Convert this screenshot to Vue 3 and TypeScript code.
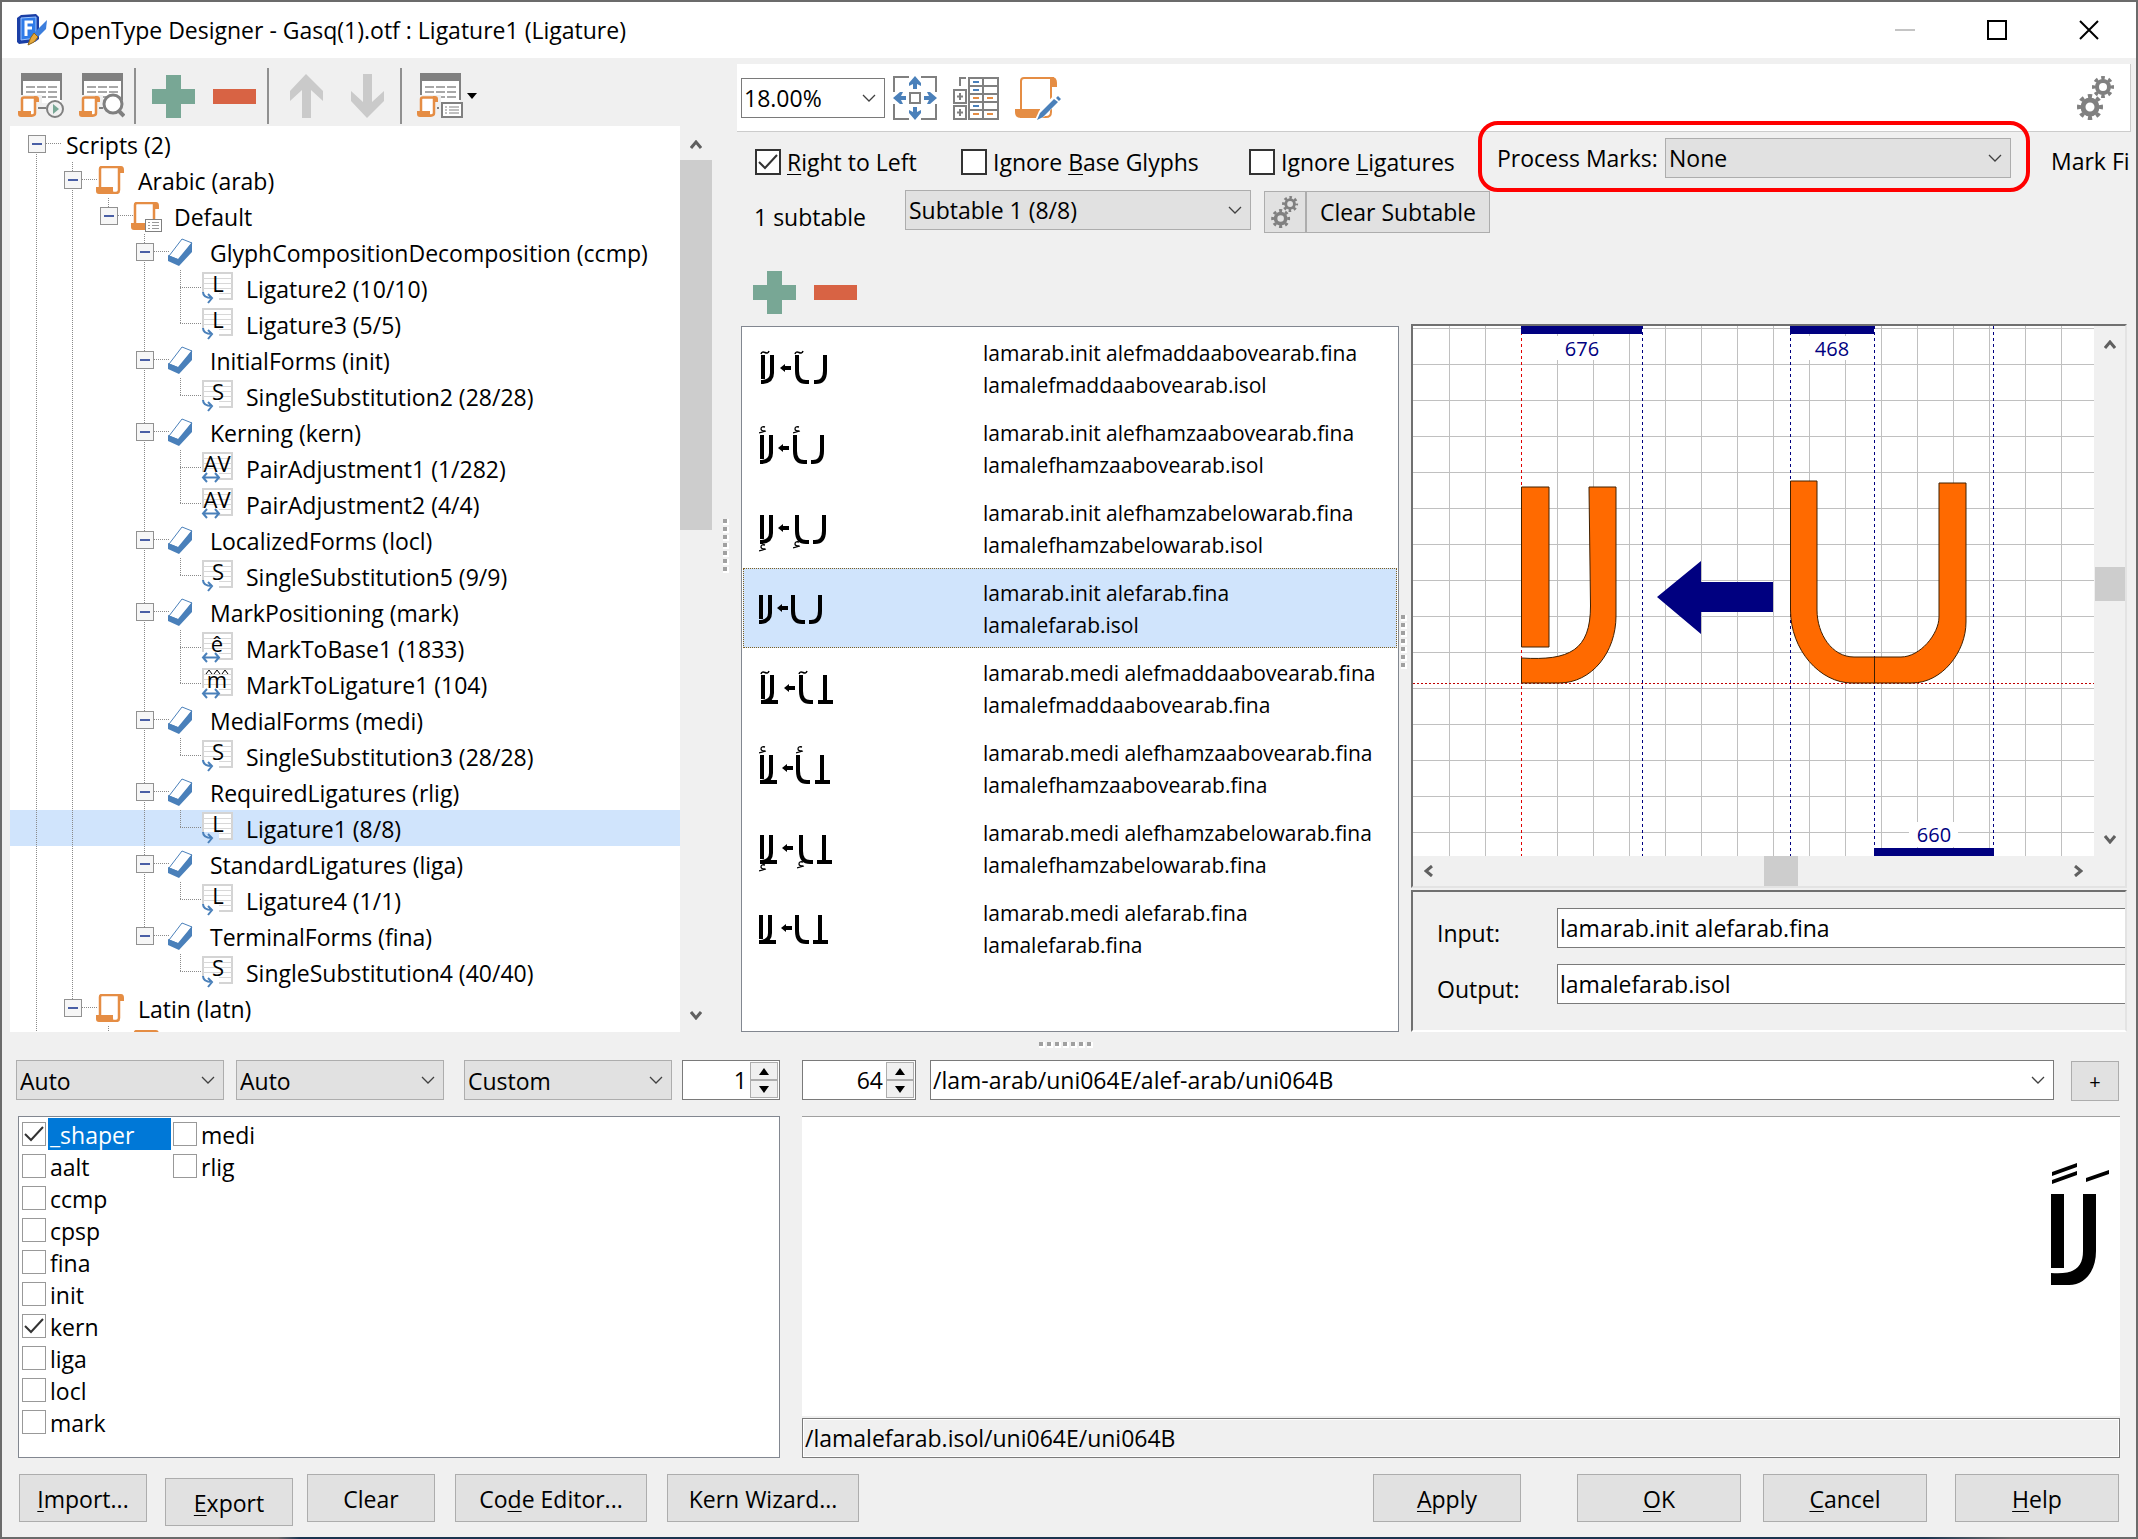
<script setup lang="ts">
import { ref } from 'vue'

type Cell = 'none' | 'line' | 'tee' | 'elbow' | 'root' | 'boxmid' | 'boxend'
interface Row {
  label: string
  cells: Cell[]
  icon: '' | 'scroll' | 'scroll-list' | 'tag' | 'lookup'
  glyph?: string
  move?: boolean
  selected?: boolean
}

const feature = (label: string, last = false): Row => ({
  label, cells: ['line', 'line', 'none', last ? 'boxend' : 'boxmid'], icon: 'tag',
})
const lookup = (label: string, glyph: string, opts: { move?: boolean; more?: boolean; last?: boolean; selected?: boolean } = {}): Row => ({
  label,
  cells: ['line', 'line', 'none', opts.last ? 'none' : 'line', opts.more ? 'tee' : 'elbow'],
  icon: 'lookup', glyph, move: opts.move, selected: opts.selected,
})

const tree: Row[] = [
  { label: 'Scripts (2)', cells: ['root'], icon: '' },
  { label: 'Arabic (arab)', cells: ['line', 'boxmid'], icon: 'scroll' },
  { label: 'Default', cells: ['line', 'line', 'boxend'], icon: 'scroll-list' },
  feature('GlyphCompositionDecomposition (ccmp)'),
  lookup('Ligature2 (10/10)', 'L', { more: true }),
  lookup('Ligature3 (5/5)', 'L'),
  feature('InitialForms (init)'),
  lookup('SingleSubstitution2 (28/28)', 'S'),
  feature('Kerning (kern)'),
  lookup('PairAdjustment1 (1/282)', 'AV', { move: true, more: true }),
  lookup('PairAdjustment2 (4/4)', 'AV', { move: true }),
  feature('LocalizedForms (locl)'),
  lookup('SingleSubstitution5 (9/9)', 'S'),
  feature('MarkPositioning (mark)'),
  lookup('MarkToBase1 (1833)', 'ê', { move: true, more: true }),
  lookup('MarkToLigature1 (104)', 'm', { move: true }),
  feature('MedialForms (medi)'),
  lookup('SingleSubstitution3 (28/28)', 'S'),
  feature('RequiredLigatures (rlig)'),
  lookup('Ligature1 (8/8)', 'L', { selected: true }),
  feature('StandardLigatures (liga)'),
  lookup('Ligature4 (1/1)', 'L'),
  feature('TerminalForms (fina)', true),
  lookup('SingleSubstitution4 (40/40)', 'S', { last: true }),
  { label: 'Latin (latn)', cells: ['line', 'boxend'], icon: 'scroll' },
  { label: '', cells: ['line', 'none', 'boxend'], icon: 'scroll-list' },
]

interface Ligature {
  input: string
  output: string
  bar: number
  arrow: number
  alef: number
  lam: number
  medial?: boolean
  mark?: 'madda' | 'above' | 'below'
  selected?: boolean
}
const ligatures: Ligature[] = [
  { input: 'lamarab.init alefmaddaabovearab.fina', output: 'lamalefmaddaabovearab.isol', bar: 17, arrow: 36, alef: 51, lam: 70, mark: 'madda' },
  { input: 'lamarab.init alefhamzaabovearab.fina', output: 'lamalefhamzaabovearab.isol', bar: 16, arrow: 34, alef: 49, lam: 67, mark: 'above' },
  { input: 'lamarab.init alefhamzabelowarab.fina', output: 'lamalefhamzabelowarab.isol', bar: 16, arrow: 34, alef: 51, lam: 69, mark: 'below' },
  { input: 'lamarab.init alefarab.fina', output: 'lamalefarab.isol', bar: 15, arrow: 33, alef: 47, lam: 65, selected: true },
  { input: 'lamarab.medi alefmaddaabovearab.fina', output: 'lamalefmaddaabovearab.fina', bar: 17, arrow: 40, alef: 55, lam: 74, medial: true, mark: 'madda' },
  { input: 'lamarab.medi alefhamzaabovearab.fina', output: 'lamalefhamzaabovearab.fina', bar: 16, arrow: 38, alef: 52, lam: 71, medial: true, mark: 'above' },
  { input: 'lamarab.medi alefhamzabelowarab.fina', output: 'lamalefhamzabelowarab.fina', bar: 16, arrow: 38, alef: 55, lam: 73, medial: true, mark: 'below' },
  { input: 'lamarab.medi alefarab.fina', output: 'lamalefarab.fina', bar: 15, arrow: 37, alef: 51, lam: 69, medial: true },
]

const features = ref([
  { tag: '_shaper', on: true, current: true },
  { tag: 'aalt', on: false }, { tag: 'ccmp', on: false }, { tag: 'cpsp', on: false },
  { tag: 'fina', on: false }, { tag: 'init', on: false }, { tag: 'kern', on: true },
  { tag: 'liga', on: false }, { tag: 'locl', on: false }, { tag: 'mark', on: false },
  { tag: 'medi', on: false }, { tag: 'rlig', on: false },
] as { tag: string; on: boolean; current?: boolean }[])

const rightToLeft = ref(true)
const ignoreBase = ref(false)
const ignoreLigatures = ref(false)
const inputGlyphs = ref('lamarab.init alefarab.fina')
const outputGlyphs = ref('lamalefarab.isol')
const sample = ref('/lam-arab/uni064E/alef-arab/uni064B')
const shaped = ref('/lamalefarab.isol/uni064E/uni064B')
const alternate = ref('1')
const size = ref('64')
</script>

<template>
  <div class="desktop">
    <svg class="defs" aria-hidden="true">
      <symbol id="scroll" viewBox="0 0 28 28">
        <path d="M4 21V3Q4 1 6 1H24Q23 2 23 5V23Q23 27 19 27H3V21Z" fill="#fff" />
        <path d="M4 21V3Q4 1 6 1H24M23 2V24Q23 27 20 27H3" fill="none" stroke="#e58d44" stroke-width="2.500" />
        <path d="M22 0H25Q28 0 28 4V7H22ZM0 21H17V24Q17 27 20 28H3Q0 28 0 25Z" fill="#e58d44" />
      </symbol>
      <symbol id="roll" viewBox="0 0 21 21">
        <path d="M4 15V3Q4 1.500 6 1.500H17V17Q17 19.500 14 19.500H3V15Z" fill="#fff" />
        <path d="M4 15V3Q4 1.500 6 1.500H18M17 2V17Q17 19.500 14 19.500H3" fill="none" stroke="#e58d44" stroke-width="2.500" />
        <path d="M16 0H18Q21 0 21 3V6H16ZM0 15H13V18Q13 20 15 21H3Q0 21 0 18Z" fill="#e58d44" />
      </symbol>
      <symbol id="note" viewBox="0 0 22 16">
        <rect x="1" y="1" width="20" height="14" fill="#fff" stroke="#808080" stroke-width="2" />
        <path d="M4 5H6M8 5H18M4 8H6M8 8H18M4 11H6M8 11H18" stroke="#808080" stroke-width="1" />
      </symbol>
      <symbol id="sheet" viewBox="0 0 46 46">
        <rect x="4" y="1" width="39" height="29" fill="#fff" />
        <rect x="3" y="0" width="41" height="8" fill="#808080" />
        <path d="M4 8V22M43 8V27" stroke="#808080" stroke-width="2" />
        <path d="M8 14H17M19 14H28M30 14H39M8 19H17M19 19H28M30 19H39M24 24H28M30 24H39" stroke="#a8a8a8" stroke-width="2" />
      </symbol>
      <symbol id="tag" viewBox="0 0 25 28">
        <path d="M14 1L24 5L11 22L1 18Z" fill="#fff" stroke="#4a80ba" stroke-width="1" />
        <path d="M0 17L10 21L24 4V14L11 28L0 23Z" fill="#4a80ba" />
      </symbol>
      <symbol id="gears" viewBox="0 0 38 44">
        <g fill="none" stroke="#808080">
          <circle cx="26" cy="11" r="6" stroke-width="4" />
          <circle cx="26" cy="11" r="9" stroke-width="4" pathLength="16" stroke-dasharray="1 1" stroke-dashoffset="0.5" />
          <circle cx="13" cy="31" r="7" stroke-width="5" />
          <circle cx="13" cy="31" r="11" stroke-width="4" pathLength="16" stroke-dasharray="1 1" stroke-dashoffset="0.5" />
        </g>
      </symbol>
      <symbol id="plus" viewBox="0 0 43 43"><path d="M14 0H29V14H43V29H29V43H14V29H0V14H14Z" fill="#78a795" /></symbol>
      <symbol id="minus" viewBox="0 0 43 43"><path d="M0 14H43V29H0Z" fill="#d86344" /></symbol>
      <symbol id="chevron" viewBox="0 0 14 8"><path d="M1 1L7 7L13 1" fill="none" stroke="#404040" stroke-width="1.3" /></symbol>
      <symbol id="angle" viewBox="0 0 12 10"><path d="M1 8L6 2L11 8" fill="none" stroke="#606060" stroke-width="3" /></symbol>
      <symbol id="madda" viewBox="0 0 10 5"><path d="M1 4Q2 1 5 2.500T9 1" fill="none" stroke="#000" stroke-width="1.500" /></symbol>
      <symbol id="hamza" viewBox="0 0 8 8"><path d="M6 1Q2 0 2 3Q2 5 6 5M0 7L7 5" fill="none" stroke="#000" stroke-width="1.300" /></symbol>
    </svg>

    <div class="window">
      <header class="titlebar">
        <svg class="logo" width="32" height="32" viewBox="0 0 32 32" aria-hidden="true">
          <path d="M2 4L6 1L21 0L24 3V25L20 28L4 30L2 28Z" fill="#1b3fa6" />
          <path d="M6 4L21 3V24L6 26Z" fill="#2f7be8" stroke="#9cc6ff" stroke-width="1" />
          <path d="M11 22V8H18M11 14H17" fill="none" stroke="#fff" stroke-width="3" />
          <path d="M32 6L31 15L23 23L19 19Z" fill="#3c7edc" />
          <path d="M19 19L23 23Q20 29 13 31Q15 23 19 19Z" fill="#e6a93c" stroke="#8a6420" stroke-width="1" />
        </svg>
        <h1>OpenType Designer - Gasq(1).otf : Ligature1 (Ligature)</h1>
        <div class="caption">
          <button aria-label="Minimize"><svg width="20" height="20"><path d="M0 10H20" stroke="#c4c4c4" stroke-width="2" /></svg></button>
          <button aria-label="Maximize"><svg width="20" height="20"><rect x="1" y="1" width="18" height="18" fill="none" stroke="#000" stroke-width="2" /></svg></button>
          <button aria-label="Close"><svg width="20" height="20"><path d="M1 1L19 19M19 1L1 19" stroke="#000" stroke-width="2" /></svg></button>
        </div>
      </header>

      <main class="upper">
        <section class="left">
          <div class="toolbar">
            <button aria-label="Compile"><svg width="46" height="46" viewBox="0 0 46 46">
              <use href="#sheet" width="46" height="46" />
              <rect x="0" y="22" width="24" height="24" fill="#f0f0f0" />
              <use href="#roll" x="0" y="23" width="21" height="21" />
              <path d="M20 35H28" stroke="#808080" stroke-width="2" />
              <circle cx="37" cy="36" r="8" fill="#f0f0f0" stroke="#808080" stroke-width="2" />
              <path d="M35 31L41 36L35 41Z" fill="#78a795" />
            </svg></button>
            <button aria-label="Find"><svg width="46" height="46" viewBox="0 0 46 46">
              <use href="#sheet" width="46" height="46" />
              <rect x="0" y="22" width="24" height="24" fill="#f0f0f0" />
              <use href="#roll" x="0" y="23" width="21" height="21" />
              <path d="M20 35H24" stroke="#808080" stroke-width="2" />
              <circle cx="34" cy="31" r="9" fill="#fff" stroke="#808080" stroke-width="3" />
              <path d="M39 37L45 43" stroke="#808080" stroke-width="4" />
            </svg></button>
            <i class="sep"></i>
            <button aria-label="Add"><svg width="43" height="43"><use href="#plus" /></svg></button>
            <button aria-label="Remove"><svg width="43" height="43"><use href="#minus" /></svg></button>
            <i class="sep"></i>
            <button aria-label="Move up"><svg width="33" height="44" viewBox="0 0 33 44"><path d="M16 0L33 17V27L21 16V44H12V16L0 27V17Z" fill="#cacaca" /></svg></button>
            <button aria-label="Move down"><svg width="33" height="44" viewBox="0 0 33 44"><path d="M16 44L33 27V17L21 28V0H12V28L0 17V27Z" fill="#cacaca" /></svg></button>
            <i class="sep"></i>
            <button aria-label="Properties"><svg width="46" height="46" viewBox="0 0 46 46">
              <use href="#sheet" width="46" height="46" />
              <rect x="0" y="22" width="24" height="24" fill="#f0f0f0" />
              <use href="#roll" x="0" y="23" width="21" height="21" />
              <path d="M20 35H22" stroke="#808080" stroke-width="2" />
              <use href="#note" x="24" y="29" width="22" height="16" />
            </svg></button>
            <svg class="drop" width="10" height="6" aria-hidden="true"><path d="M0 0H10L5 6Z" fill="#000" /></svg>
          </div>
          <div class="tree-frame">
            <ul class="tree" role="tree">
              <li v-for="(row, i) in tree" :key="i" :class="{ selected: row.selected }" role="treeitem">
                <svg v-for="(c, j) in row.cells" :key="j" class="cell" width="36" height="36" viewBox="0 0 36 36" aria-hidden="true">
                  <g stroke="#8a8a8a" stroke-width="1" stroke-dasharray="1 1" fill="none">
                    <path v-if="c === 'line' || c === 'tee' || c === 'boxmid'" d="M18.500 0V36" />
                    <path v-if="c === 'elbow' || c === 'boxend'" d="M18.500 0V18" />
                    <path v-if="c === 'root'" d="M18.500 18V36" />
                    <path v-if="c === 'tee' || c === 'elbow'" d="M18 17.500H40" />
                    <path v-if="c === 'boxmid' || c === 'boxend' || c === 'root'" d="M28 17.500H44" />
                  </g>
                  <g v-if="c === 'boxmid' || c === 'boxend' || c === 'root'">
                    <rect x="10.500" y="9.500" width="17" height="17" fill="#f6f6f6" stroke="#919191" />
                    <path d="M14 18H24" stroke="#4a5fa5" stroke-width="2" />
                  </g>
                </svg>
                <svg v-if="row.icon" class="cell" width="36" height="36" viewBox="0 0 36 36" aria-hidden="true">
                  <use v-if="row.icon === 'scroll'" href="#scroll" x="6" y="4" width="28" height="28" />
                  <g v-else-if="row.icon === 'scroll-list'">
                    <use href="#scroll" x="5" y="4" width="28" height="28" />
                    <rect x="19.500" y="21.500" width="16" height="12" fill="#fff" stroke="#808080" />
                    <path d="M22 24.500H24M26 24.500H33M22 27.500H24M26 27.500H33M22 30.500H24M26 30.500H33" stroke="#999" />
                  </g>
                  <use v-else-if="row.icon === 'tag'" href="#tag" x="6" y="4" width="25" height="28" />
                  <g v-else>
                    <rect x="5" y="3" width="29" height="26" fill="#fff" stroke="#d4d4d4" stroke-width="2" />
                    <path d="M5 8.500H34M5 13.500H34M5 18.500H34M5 23.500H34" stroke="#d8d8d8" />
                    <path d="M4 22H21V34H4Z" :fill="row.selected ? '#d0e4fc' : '#fff'" />
                    <text :x="row.glyph === 'L' || row.glyph === 'S' ? 20 : 19" y="22" text-anchor="middle" class="mini">{{ row.glyph }}</text>
                    <path v-if="row.glyph === 'm'" d="M8 8L11 4L14 8M16 8L19 4L22 8M24 8L27 4L30 8" fill="none" stroke="#000" />
                    <path v-if="row.move" d="M9 23L5 27.500L9 32M17 23L21 27.500L17 32M6 27.500H20" fill="none" stroke="#4a80ba" stroke-width="2" />
                    <path v-else d="M5 22Q5 28 14 28M10 24L14 28L10 33" fill="none" stroke="#4a80ba" stroke-width="2" />
                  </g>
                </svg>
                <span v-if="row.label" class="label">{{ row.label }}</span>
              </li>
            </ul>
            <div class="vbar">
              <svg class="up" width="12" height="10"><use href="#angle" /></svg>
              <i class="thumb"></i>
              <svg class="down" width="12" height="10"><use href="#angle" /></svg>
            </div>
          </div>
        </section>

        <div class="grip vertical main-grip" aria-hidden="true"><i v-for="n in 7" :key="n"></i></div>

        <section class="right">
          <div class="toolbar light">
            <span class="pick zoom">
              <select aria-label="Zoom"><option>18.00%</option></select>
              <svg width="14" height="8"><use href="#chevron" /></svg>
            </span>
            <button aria-label="Fit"><svg width="44" height="44" viewBox="0 0 44 44">
              <path d="M16 1H1V16M28 1H43V16M1 28V43H16M43 28V43H28M17 17H27V27H17Z" fill="none" stroke="#808080" stroke-width="2" />
              <g fill="#4a80ba">
                <path d="M22 0L28 7V10L24 8V13H20V8L16 10V7Z" />
                <path d="M22 44L28 37V34L24 36V31H20V36L16 34V37Z" />
                <path d="M0 22L7 16H10L8 20H13V24H8L10 28H7Z" />
                <path d="M44 22L37 16H34L36 20H31V24H36L34 28H37Z" />
              </g>
            </svg></button>
            <button aria-label="Table"><svg width="46" height="44" viewBox="0 0 46 44">
              <path d="M16 2H45V43H16ZM16 10H45M16 18H45M16 26H45M16 34H45M30 2V43M1 14H13V27H1ZM1 30H13V43H1ZM7 10V2H13M7 17V24M4 20.500H10M7 33V40M4 36.500H10" fill="none" stroke="#808080" stroke-width="2" />
              <path d="M20 6H26M20 14H26M20 30H26" stroke="#4a80ba" stroke-width="2" />
              <path d="M20 22H26M34 22H40M20 38H26M34 38H40" stroke="#e58d44" stroke-width="2" />
            </svg></button>
            <button aria-label="Edit script"><svg width="46" height="44" viewBox="0 0 46 44">
              <path d="M6 33V5Q6 2 9 2H39M36 4V36Q36 41 31 41H5" fill="none" stroke="#e58d44" stroke-width="2" />
              <path d="M35 1H37Q42 1 42 7V11H35ZM0 33H25V37Q25 40 28 42H6Q0 42 0 36Z" fill="#e58d44" />
              <path d="M20 44L24 35L41 17L46 23L29 41Z" fill="#fff" />
              <path d="M22 44L25 37L39 23L43 26L28 41ZM41 22L43 20L46 23L44 25Z" fill="#4a80ba" />
            </svg></button>
            <button class="end" aria-label="Settings"><svg width="38" height="44"><use href="#gears" /></svg></button>
          </div>

          <div class="options">
            <label class="tick first"><input v-model="rightToLeft" type="checkbox" /><span><u>R</u>ight to Left</span></label>
            <label class="tick second"><input v-model="ignoreBase" type="checkbox" /><span>Ignore <u>B</u>ase Glyphs</span></label>
            <label class="tick third"><input v-model="ignoreLigatures" type="checkbox" /><span>Ignore <u>L</u>igatures</span></label>
            <div class="marks">
              <label for="marks">Process Marks:</label>
              <span class="pick grey wide">
                <select id="marks"><option>None</option></select>
                <svg width="14" height="8"><use href="#chevron" /></svg>
              </span>
            </div>
            <span class="filter">Mark Fi</span>
          </div>

          <div class="subtables">
            <label for="subtable">1 subtable</label>
            <span class="pick grey wide">
              <select id="subtable"><option>Subtable 1 (8/8)</option></select>
              <svg width="14" height="8"><use href="#chevron" /></svg>
            </span>
            <button class="btn gear" aria-label="Subtable settings"><svg width="28" height="32"><use href="#gears" /></svg></button>
            <button class="btn clear">Clear Subtable</button>
          </div>

          <div class="add-remove">
            <button aria-label="Add ligature"><svg width="43" height="43"><use href="#plus" /></svg></button>
            <button aria-label="Remove ligature"><svg width="43" height="43"><use href="#minus" /></svg></button>
          </div>

          <div class="editor">
            <ul class="ligatures">
              <li v-for="l in ligatures" :key="l.input" :class="{ selected: l.selected }">
                <svg width="240" height="78" aria-hidden="true">
                  <g :transform="`translate(${l.bar} 26)`" fill="none" stroke="#000">
                    <path d="M2 0V24" stroke-width="4" />
                    <path d="M11 0V18Q11 26 2 27H0" stroke-width="4" />
                    <path v-if="l.medial" d="M0 27H17" stroke-width="4" />
                  </g>
                  <path :transform="`translate(${l.arrow} 39)`" d="M0 0L5 -4V-2H11V2H5V4Z" />
                  <path :transform="`translate(${l.alef} 26)`" d="M2 0V16Q2 27 11 27H14" fill="none" stroke="#000" stroke-width="4" />
                  <path v-if="l.medial" :transform="`translate(${l.lam} 26)`" d="M7 0V26M0 27H15" fill="none" stroke="#000" stroke-width="4" />
                  <path v-else :transform="`translate(${l.lam} 26)`" d="M11 0V16Q11 27 2 27H0" fill="none" stroke="#000" stroke-width="4" />
                  <g v-if="l.mark === 'madda'">
                    <use href="#madda" :x="l.bar - 1" y="21" width="10" height="5" />
                    <use href="#madda" :x="l.alef - 1" y="21" width="10" height="5" />
                  </g>
                  <g v-else-if="l.mark">
                    <use href="#hamza" :x="l.bar - 1" :y="l.mark === 'above' ? 17 : 55" width="8" height="8" />
                    <use href="#hamza" :x="l.mark === 'above' ? l.alef : l.alef - 2" :y="l.mark === 'above' ? 17 : 52" width="8" height="8" />
                  </g>
                </svg>
                <span>{{ l.input }}<br />{{ l.output }}</span>
              </li>
            </ul>

            <div class="grip vertical list-grip" aria-hidden="true"><i v-for="n in 7" :key="n"></i></div>

            <div class="side">
              <div class="canvas-frame">
                <div class="canvas">
                  <svg width="720" height="532" viewBox="1413 326 720 532" role="img" aria-label="Ligature metrics">
                    <path d="M1449.500 326V857M1485.500 326V857M1557.500 326V857M1593.500 326V857M1629.500 326V857M1665.500 326V857M1701.500 326V857M1737.500 326V857M1773.500 326V857M1809.500 326V857M1845.500 326V857M1881.500 326V857M1917.500 326V857M1953.500 326V857M1989.500 326V857M2025.500 326V857M2061.500 326V857" stroke="#c0c0c0" />
                    <path v-for="n in 15" :key="n" :d="`M1413 ${292.5 + n * 36}H2133`" stroke="#c0c0c0" />
                    <path d="M1521.500 326V857" stroke="#e00000" stroke-dasharray="3 3" />
                    <path d="M1413 683.500H2133" stroke="#c00000" stroke-dasharray="2 2" />
                    <path d="M1642.500 326V857M1790.500 326V857M1874.500 326V857M1993.500 326V857" stroke="#000080" stroke-dasharray="3 3" />
                    <path d="M1557 336H1606V360H1557ZM1807 336H1856V360H1807ZM1909 822H1958V847H1909Z" fill="#fff" />
                    <path d="M1521 326H1642V334H1521ZM1790 326H1874V334H1790ZM1874 848H1994V857H1874Z" fill="#000080" />
                    <g class="metric" text-anchor="middle">
                      <text x="1582" y="356">676</text>
                      <text x="1832" y="356">468</text>
                      <text x="1934" y="842">660</text>
                    </g>
                    <g fill="#ff6a00" stroke="#402000">
                      <path d="M1521.500 487H1549V647H1521.500Z" />
                      <path d="M1589 487H1616V616C1616 652 1592 683 1559 683H1521.500V658C1570 661 1590.500 650 1590.500 606Z" />
                      <path d="M1790.500 481H1817V610C1817 634 1832 657 1854 657H1874.500V683H1852C1820 683 1790.500 650 1790.500 610Z" />
                      <path d="M1939 483H1966V622C1966 652 1942 683 1912 683H1874.500V657H1901C1920 657 1939 634 1939 617Z" />
                    </g>
                    <path d="M1657 597L1701 561V582H1773V612H1701V634Z" fill="#000080" />
                  </svg>
                </div>
                <div class="vbar slim">
                  <svg class="up" width="12" height="10"><use href="#angle" /></svg>
                  <i class="thumb"></i>
                  <svg class="down" width="12" height="10"><use href="#angle" /></svg>
                </div>
                <div class="hbar">
                  <svg class="to-left" width="12" height="10"><use href="#angle" /></svg>
                  <i class="thumb"></i>
                  <svg class="to-right" width="12" height="10"><use href="#angle" /></svg>
                </div>
              </div>
              <div class="fields">
                <label for="in">Input:</label><input id="in" v-model="inputGlyphs" type="text" />
                <label for="out">Output:</label><input id="out" v-model="outputGlyphs" type="text" />
              </div>
            </div>
          </div>
        </section>
      </main>

      <div class="grip horizontal" aria-hidden="true"><i v-for="n in 7" :key="n"></i></div>

      <section class="lower">
        <div class="shaper">
          <div class="row">
            <span class="pick grey"><select aria-label="Script"><option>Auto</option></select><svg width="14" height="8"><use href="#chevron" /></svg></span>
            <span class="pick grey"><select aria-label="Language"><option>Auto</option></select><svg width="14" height="8"><use href="#chevron" /></svg></span>
            <span class="pick grey third"><select aria-label="Features"><option>Custom</option></select><svg width="14" height="8"><use href="#chevron" /></svg></span>
            <span class="spin one">
              <input v-model="alternate" type="text" aria-label="Alternate" />
              <span><button aria-label="Increase alternate"><svg width="10" height="7"><path d="M0 7L5 0L10 7Z" /></svg></button><button aria-label="Decrease alternate"><svg width="10" height="7"><path d="M0 0L5 7L10 0Z" /></svg></button></span>
            </span>
          </div>
          <ul class="features">
            <li v-for="f in features" :key="f.tag">
              <label :class="{ current: f.current }"><input v-model="f.on" type="checkbox" /><span>{{ f.tag }}</span></label>
            </li>
          </ul>
        </div>
        <div class="preview">
          <div class="row">
            <span class="spin two">
              <input v-model="size" type="text" aria-label="Font size" />
              <span><button aria-label="Increase size"><svg width="10" height="7"><path d="M0 7L5 0L10 7Z" /></svg></button><button aria-label="Decrease size"><svg width="10" height="7"><path d="M0 0L5 7L10 0Z" /></svg></button></span>
            </span>
            <span class="pick sample"><input v-model="sample" type="text" aria-label="Sample text" /><svg width="14" height="8"><use href="#chevron" /></svg></span>
            <button class="btn add" aria-label="Add sample">+</button>
          </div>
          <div class="stage">
            <svg width="60" height="124" viewBox="0 0 60 124" role="img" aria-label="Shaped sample">
              <path d="M1 9L26 0V4L1 13ZM1 17L26 8V12L1 21ZM35 15L58 7V11L35 19Z" />
              <path d="M0 31H13V105H0ZM32 31H45V88C45 108 34 122 18 122H0V110C24 112 32 104 32 88Z" />
            </svg>
          </div>
          <input v-model="shaped" class="result" type="text" readonly aria-label="Shaped glyphs" />
        </div>
      </section>

      <footer class="buttons">
        <button class="btn b-s"><span><u>I</u>mport...</span></button>
        <button class="btn b-s low"><span><u>E</u>xport</span></button>
        <button class="btn b-s next">Clear</button>
        <button class="btn b-l">Co<u>d</u>e Editor...</button>
        <button class="btn b-l">Kern Wizard...</button>
        <button class="btn apply"><u>A</u>pply</button>
        <button class="btn b-m ok"><u>O</u>K</button>
        <button class="btn b-m cancel"><u>C</u>ancel</button>
        <button class="btn b-m help"><u>H</u>elp</button>
      </footer>
    </div>
  </div>
</template>

<style>
html, body { margin: 0; background: #6b6b6b; }
</style>

<style scoped>
* { box-sizing: border-box; }
.desktop {
  height: 100vh;
  min-height: 1200px;
  padding: 2px;
  display: flex;
  font: 23px/32px "Open Sans", "Noto Sans", sans-serif;
  font-variant-ligatures: none;
  color: #000;
  background: linear-gradient(to right, #6b6b6b 13%, #1c3550 14%, #1c3550 90%, #6b6b6b 94%) bottom / 100% 2px no-repeat, #6b6b6b;
  overflow: hidden;
}
.defs { position: absolute; width: 0; height: 0; }
.window { flex: 1; min-width: 0; display: flex; flex-direction: column; background: #f0f0f0; }
button { font: inherit; font-variant-ligatures: none; color: inherit; border: 0; padding: 0; background: none; display: flex; align-items: center; justify-content: center; white-space: pre; }
input, select { font: inherit; font-variant-ligatures: none; color: inherit; margin: 0; border-radius: 0; outline: 0; }
ul { list-style: none; margin: 0; padding: 0; }
u { text-underline-offset: 3px; text-decoration-thickness: 1px; }

.titlebar { height: 56px; flex: none; display: flex; align-items: center; background: #fff; padding-left: 13px; }
.titlebar h1 { margin: 0 0 0 5px; font-size: 23px; font-weight: 400; }
.caption { margin-left: auto; padding-right: 1px; display: flex; }
.caption button { width: 92px; height: 54px; }

.upper { flex: 1; min-height: 0; display: flex; }
.left { width: 702px; margin-left: 8px; flex: none; display: flex; flex-direction: column; }
.toolbar { height: 68px; flex: none; display: flex; align-items: center; }
.left .toolbar button { width: 61px; height: 46px; }
.left .toolbar { padding-top: 8px; }
.sep { width: 2px; height: 56px; margin: 0 7px 0 2px; background: #909090; }
.drop { margin-left: -3px; }

.tree-frame { flex: 1; min-height: 0; display: flex; }
.tree { flex: 1; min-width: 0; background: #fff; overflow: hidden; }
.tree li { height: 36px; padding-left: 8px; display: flex; align-items: center; white-space: nowrap; }
.tree li.selected { background: #d0e4fc; }
.cell { flex: none; overflow: visible; }
.label { margin-left: 12px; line-height: 34px; padding-top: 2px; }
.mini { font-size: 22px; }

.vbar { width: 32px; flex: none; display: flex; flex-direction: column; align-items: center; padding: 14px 0 12px; }
.vbar .thumb { width: 32px; height: 370px; margin-top: 10px; background: #cdcdcd; }
.vbar .down { margin-top: auto; transform: rotate(180deg); }

.grip { flex: none; display: flex; gap: 4px; }
.grip i { width: 4px; height: 4px; background: #a0a0a0; box-shadow: 1px 1px 0 1px #fff; }
.grip.vertical { flex-direction: column; }
.main-grip { width: 25px; padding: 461px 0 0 11px; }
.list-grip { width: 12px; padding: 291px 0 0 2px; }
.grip.horizontal { height: 28px; padding: 10px 0 0 1037px; }

.right { flex: 1; min-width: 0; display: flex; flex-direction: column; }
.toolbar.light { margin: 6px 5px 0 0; padding: 0 15px 0 4px; background: #fff; border-bottom: 1px solid #ccc; border-right: 1px solid #ccc; }
.light button { margin-left: 16px; }
.light .zoom + button { margin-left: 8px; }
.light button.end { margin-left: auto; }

.pick { position: relative; display: block; height: 40px; width: 208px; flex: none; }
.pick select, .pick input { appearance: none; width: 100%; height: 40px; border: 1px solid #7a7a7a; background: #fff; padding: 0 30px 0 3px; }
.pick input { padding-left: 2px; }
.pick svg { position: absolute; right: 9px; top: 16px; pointer-events: none; }
.pick.grey select { background: #e1e1e1; border-color: #adadad; }
.pick.zoom { width: 144px; }
.pick.zoom select { padding-left: 2px; }
.pick.wide { width: 346px; }

.options { height: 58px; flex: none; display: flex; align-items: center; padding-left: 18px; margin-right: 5px; white-space: nowrap; }
.tick { display: flex; align-items: center; gap: 6px; margin-top: 1px; flex: none; }
.tick.first { width: 206px; }
.tick.second { width: 288px; }
.tick.third { width: 248px; }
input[type="checkbox"] { appearance: none; width: 26px; height: 26px; flex: none; border: 2px solid #333; background: #fff center / 22px 22px no-repeat; }
input[type="checkbox"]:checked { background-image: url("data:image/svg+xml,%3Csvg xmlns='http://www.w3.org/2000/svg' viewBox='0 0 22 22'%3E%3Cpath d='M2 11L8 17L20 4' fill='none' stroke='%23333' stroke-width='2'/%3E%3C/svg%3E"); }
.marks { position: relative; width: 514px; flex: none; display: flex; align-items: center; justify-content: space-between; margin-top: -6px; }
.marks::after { content: ""; position: absolute; inset: -17px -19px -14px; border: 4px solid #f00; border-radius: 20px; pointer-events: none; }
.filter { flex: 1; min-width: 0; margin-left: 40px; overflow: hidden; }

.subtables { height: 43px; flex: none; display: flex; padding-left: 17px; }
.subtables label { width: 151px; margin-top: 11px; }
.btn { background: #e1e1e1; border: 1px solid #adadad; flex: none; }
.btn.gear { width: 42px; height: 42px; margin: 1px 0 0 13px; }
.btn.clear { width: 184px; height: 42px; margin-top: 1px; }
.add-remove { height: 91px; flex: none; display: flex; gap: 18px; align-items: flex-end; padding: 0 0 10px 16px; }

.editor { flex: 1; min-height: 0; display: flex; padding-left: 4px; }
.ligatures { flex: 1; min-width: 0; margin-top: 2px; border: 1px solid #828790; background: #fff; padding: 1px; overflow: hidden; }
.ligatures li { height: 80px; display: flex; align-items: flex-start; border: 1px solid transparent; font-size: 21px; white-space: nowrap; }
.ligatures li span { padding-top: 8px; margin-left: -1px; }
.ligatures li.selected { background: #d0e4fc; border: 1px dotted #806020; }
.ligatures svg { flex: none; }
.side { width: 725px; flex: none; display: flex; flex-direction: column; padding-right: 9px; }
.canvas-frame { flex: 1; min-height: 0; display: grid; grid-template: minmax(0, 1fr) 30px / minmax(0, 1fr) 31px; border: 2px solid; border-color: #707070 #e3e3e3 #e3e3e3 #707070; }
.canvas { background: #fff; overflow: hidden; }
.canvas svg { display: block; }
.metric { font-size: 20px; fill: #000080; }
.vbar.slim { width: 31px; }
.vbar.slim .thumb { width: 30px; height: 34px; margin-top: 217px; }
.hbar { display: flex; align-items: center; padding: 0 10px; }
.hbar .thumb { width: 34px; height: 30px; margin-left: 329px; background: #cdcdcd; }
.to-left { transform: rotate(-90deg); }
.to-right { transform: rotate(90deg); margin-left: auto; }
.fields { height: 142px; flex: none; margin-top: 2px; display: grid; grid-template-columns: 120px 1fr; grid-auto-rows: 40px; row-gap: 16px; padding: 16px 0 0 24px; border: 2px solid; border-color: #707070 #e3e3e3 #fff #707070; }
.fields label { padding-top: 9px; }
.fields input { border: 1px solid #7a7a7a; border-right: 0; background: #fff; padding: 0 2px; min-width: 0; }

.lower { flex: none; height: 398px; display: flex; padding: 0 16px 0 14px; }
.shaper { width: 764px; flex: none; display: flex; flex-direction: column; }
.row { display: flex; height: 40px; margin-bottom: 16px; flex: none; }
.shaper .pick + .pick { margin-left: 12px; }
.shaper .pick.third { margin-left: 20px; }
.lower .grey select { padding-top: 2px; }
.spin { display: flex; height: 40px; border: 1px solid #7a7a7a; background: #fff; padding: 1px; }
.spin input { flex: 1; min-width: 0; width: 0; border: 0; text-align: right; padding: 0 3px; }
.spin > span { width: 28px; display: flex; flex-direction: column; }
.spin button { flex: 1; border: 1px solid #adadad; background: #f0f0f0; }
.spin.one { width: 98px; margin-left: 10px; }
.spin.two { width: 114px; margin-right: 14px; }
.features { flex: 1; min-height: 0; margin-left: 2px; border: 1px solid #828790; background: #fff; padding: 1px 3px; display: grid; grid-template-rows: repeat(10, 32px); grid-auto-flow: column; grid-auto-columns: 151px; }
.features label { display: flex; align-items: center; height: 32px; }
.features input { width: 24px; height: 24px; border: 1px solid #999; margin-right: 2px; }
.features label span { flex: 1; height: 32px; padding: 1px 0 0 2px; margin-right: 2px; }
.features .current span { background: #0078d7; color: #fff; }
.preview { flex: 1; min-width: 0; margin-left: 22px; display: flex; flex-direction: column; }
.pick.sample { flex: 1; width: auto; }
.btn.add { width: 48px; height: 40px; margin: 1px 1px 0 17px; padding-top: 2px; font-size: 20px; }
.stage { flex: 1; min-height: 0; background: #fff; border-top: 1px solid #a0a0a0; display: flex; justify-content: flex-end; padding: 46px 9px 0 0; }
.result { height: 40px; margin-top: 2px; border: 1px solid #7a7a7a; background: #f0f0f0; padding: 0 2px; box-shadow: inset 0 0 0 1px #fff; }

.buttons { flex: none; height: 79px; display: flex; align-items: flex-start; padding: 16px 17px 0 17px; }
.buttons .btn { height: 48px; padding-top: 2px; }
.b-s { width: 128px; }
.b-s.low { margin: 4px 0 0 18px; }
.b-s.next { margin-left: 14px; }
.b-l { width: 192px; margin-left: 20px; }
.b-m { width: 164px; }
.apply { width: 148px; margin-left: auto; }
.ok { margin-left: 56px; }
.cancel { margin-left: 22px; }
.help { margin-left: 28px; }
</style>
